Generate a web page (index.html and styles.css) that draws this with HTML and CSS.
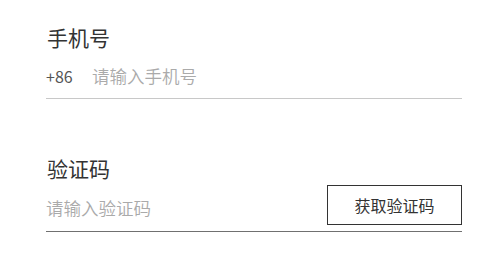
FILE: index.html
```html
<!DOCTYPE html>
<html lang="zh-CN">
<head>
<meta charset="utf-8">
<link rel="stylesheet" href="styles.css">
</head>
<body>
<form class="form">
  <div class="field">
    <div class="label">手机号</div>
    <div class="row row-phone">
      <span class="prefix">+86</span>
      <span class="placeholder">请输入手机号</span>
    </div>
  </div>
  <div class="field field-code">
    <div class="label">验证码</div>
    <div class="row row-code">
      <span class="placeholder">请输入验证码</span>
      <button type="button" class="code-btn">获取验证码</button>
    </div>
  </div>
</form>
</body>
</html>
```

FILE: styles.css
```css
* { box-sizing: border-box; }
html, body { margin: 0; padding: 0; background: #fff; }
body {
  font-family: "Noto Sans CJK SC", "Noto Sans", sans-serif;
  font-weight: 400;
  color: #333;
}
.form {
  width: 416px;
  margin-left: 46px;
  padding-top: 23px;
  display: flex;
  flex-direction: column;
}
.label {
  font-size: 21px;
  line-height: 28px;
  color: #333;
  padding-left: 1px;
}
.row {
  display: flex;
  border-bottom: 1px solid #c8c8c8;
}
.row-phone {
  margin-top: 14px;
  padding-bottom: 11px;
  align-items: center;
  line-height: 22px;
}
.prefix {
  font-size: 16px;
  color: #555;
  width: 46px;
}
.placeholder {
  font-size: 17.5px;
  font-weight: 350;
  color: #aaa;
  line-height: 22px;
}
.field-code {
  margin-top: 55px;
}
.row-code {
  margin-top: 3px;
  padding-bottom: 6px;
  align-items: flex-end;
  justify-content: space-between;
  border-bottom-color: #707070;
}
.row-code .placeholder {
  margin-bottom: 6px;
}
.code-btn {
  width: 135px;
  height: 40px;
  border: 1px solid #333;
  background: #fff;
  font-family: inherit;
  font-weight: 400;
  font-size: 16px;
  color: #333;
  padding: 0;
  cursor: pointer;
}
```
